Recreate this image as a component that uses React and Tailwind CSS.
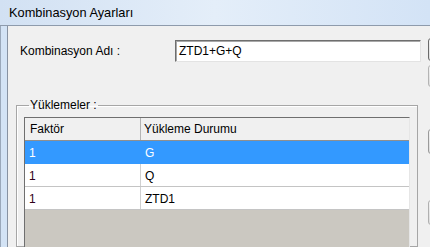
import React from 'react';

const rows = [
  { factor: '1', load: 'G', selected: true },
  { factor: '1', load: 'Q' },
  { factor: '1', load: 'ZTD1' },
];

const SideButton = ({ className = '' }) => (
  <div
    className={`w-[75px] shrink-0 rounded-[3px] border bg-gradient-to-b from-[#f2f2f2] to-[#dcdcdc] ${className}`}
  />
);

export default function App() {
  return (
    <div
      className="w-[430px] h-[247px] overflow-hidden flex flex-col bg-[#f0f0f0] text-[12px] text-black"
      style={{ fontFamily: '"Liberation Sans", Arial, sans-serif' }}
    >
      {/* title bar */}
      <div className="h-[26px] shrink-0 flex items-center pl-[9px] border-b border-[#8e9bac] bg-gradient-to-r from-[#d2e1f3] via-[#e4eef9] to-[#d3e3f6]">
        <span className="text-[12.8px] leading-none pt-[2px]">Kombinasyon Ayarları</span>
      </div>

      <div className="flex flex-1 min-h-0">
        {/* window frame */}
        <div className="w-[8px] shrink-0 border-l border-[#9aa8ba] border-r border-r-[#8792a2] bg-[#d3e3f5]" />

        {/* form area */}
        <div className="w-[418px] shrink-0 flex flex-col">
          <div className="flex items-center mt-[14px] pl-[12px] h-[22px]">
            <div className="w-[155px] shrink-0">Kombinasyon Adı :</div>
            <div className="w-[246px] h-[22px] shrink-0 flex items-center pl-[3px] bg-white border border-t-[#6e6e6e] border-l-[#6e6e6e] border-b-[#e3e3e3] border-r-[#e3e3e3] shadow-[inset_1px_1px_0_#a8a8a8]">
              ZTD1+G+Q
            </div>
          </div>

          <fieldset className="ml-[8px] mt-[36px] w-[402px] flex-1 min-h-0 border border-[#a6a6a6] shadow-[inset_1px_1px_0_#ffffff] px-[7px] pt-[5px]">
            <legend className="ml-[5px] px-[1px] leading-[14px]">Yüklemeler :</legend>

            {/* list view */}
            <div className="h-[200px] flex flex-col border-t border-l border-[#6f6f6f] border-r border-r-[#e6e6e6] bg-[#cbc8c1]">
              <div className="h-[23px] shrink-0 flex bg-[#f0f0f0] border-b border-[#8f8f8f]">
                <div className="w-[116px] shrink-0 flex items-center pl-[5px] border-r border-[#b4b4b4]">Faktör</div>
                <div className="flex-1 flex items-center pl-[3px]">Yükleme Durumu</div>
              </div>
              {rows.map((r, i) => (
                <div
                  key={i}
                  className={`h-[23px] shrink-0 flex border-b ${
                    r.selected
                      ? 'bg-[#3399ff] text-white border-[#3399ff]'
                      : 'bg-white text-black border-[#c4c4c4]'
                  }`}
                >
                  <div
                    className={`w-[116px] shrink-0 flex items-center pl-[4px] pt-[1px] border-r ${
                      r.selected ? 'border-[#3399ff]' : 'border-[#d0d0d0] text-[#300018]'
                    }`}
                  >
                    {r.factor}
                  </div>
                  <div className="flex-1 flex items-center pl-[4px] pt-[1px]">{r.load}</div>
                </div>
              ))}
            </div>
          </fieldset>
        </div>

        {/* buttons, cut off by the window edge */}
        <div className="flex flex-col pl-[2px]">
          <SideButton className="mt-[12px] h-[23px] border-[#6a6a6a]" />
          <SideButton className="mt-[4px] h-[22px] border-[#b4b4b4]" />
          <SideButton className="mt-[42px] h-[25px] border-[#9a9a9a]" />
          <SideButton className="mt-[46px] h-[25px] border-[#b0b0b0]" />
        </div>
      </div>
    </div>
  );
}
